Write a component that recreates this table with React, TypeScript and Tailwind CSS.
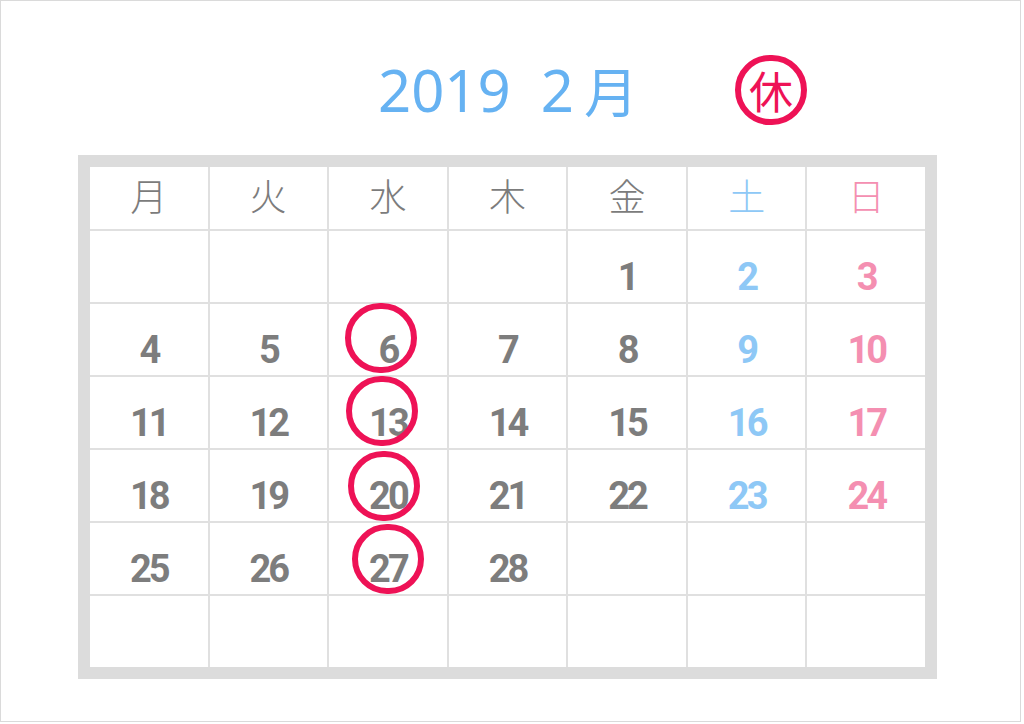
import React from "react";

const weekdays = [
  { label: "月", color: "text-[#7c7c7c]" },
  { label: "火", color: "text-[#7c7c7c]" },
  { label: "水", color: "text-[#7c7c7c]" },
  { label: "木", color: "text-[#7c7c7c]" },
  { label: "金", color: "text-[#7c7c7c]" },
  { label: "土", color: "text-[#8ec8f6]" },
  { label: "日", color: "text-[#f48fb1]" },
];

// Feb 2019 starts on a Friday (Monday-first grid)
const cells: (number | null)[] = [
  ...Array(4).fill(null),
  ...Array.from({ length: 28 }, (_, i) => i + 1),
];
while (cells.length < 42) cells.push(null);

// holiday marks: day -> circle offset from cell centre
const marks: Record<number, { dx: number; dy: number }> = {
  6: { dx: -7, dy: -2 },
  13: { dx: -6, dy: -2 },
  20: { dx: -4, dy: 0 },
  27: { dx: 0, dy: 0 },
};

function dayColor(col: number) {
  if (col === 5) return "text-[#8ec8f6]";
  if (col === 6) return "text-[#f48fb1]";
  return "text-[#7d7d7d]";
}

export default function App() {
  return (
    <div className="w-[1021px] h-[722px] border border-[#dadada] bg-white pt-[54px] font-['Noto_Sans','Noto_Sans_CJK_JP',sans-serif]">
      <div className="flex h-[70px] items-center pl-[377px]">
        <div className="flex w-[357px] items-center text-[58px] leading-none text-[#66b2f2] font-['Noto_Sans','Noto_Sans_CJK_JP',sans-serif]">
          <span>2019&nbsp;&nbsp;2</span>
          <span className="ml-[10px] text-[54px] font-['Noto_Sans_CJK_JP',sans-serif]">月</span>
        </div>
        <div className="flex h-[70px] w-[72px] items-center justify-center rounded-full border-[6px] border-[#ee1256]">
          <span className="text-[44px] leading-none text-[#ee1256] font-['Noto_Sans_CJK_JP',sans-serif]">
            休
          </span>
        </div>
      </div>

      <div className="ml-[77px] mt-[30px] w-[859px] border-[12px] border-[#dcdcdc] bg-[#dcdcdc]">
        <div className="grid grid-cols-7 grid-rows-[62px_repeat(6,71px)] gap-[2px] bg-[#e0e0e0]">
          {weekdays.map((w) => (
            <div
              key={w.label}
              className={`flex items-center justify-center bg-white pb-[6px] text-[37px] font-light leading-none font-['Noto_Sans_CJK_JP',sans-serif] ${w.color}`}
            >
              {w.label}
            </div>
          ))}
          {cells.map((d, i) => {
            const col = i % 7;
            const mark = d !== null ? marks[d] : undefined;
            return (
              <div
                key={i}
                className="relative flex items-center justify-center bg-white pt-[20px]"
              >
                {d !== null && (
                  <span
                    className={`text-[38px] font-bold leading-none tracking-[-3px] font-['Roboto',sans-serif] ${dayColor(col)}`}
                  >
                    {d}
                  </span>
                )}
                {mark && (
                  <div
                    className="absolute left-1/2 top-1/2 h-[70px] w-[72px] rounded-full border-[6px] border-[#ee1256]"
                    style={{
                      transform: `translate(calc(-50% + ${mark.dx}px), calc(-50% + ${mark.dy}px))`,
                    }}
                  />
                )}
              </div>
            );
          })}
        </div>
      </div>
    </div>
  );
}
